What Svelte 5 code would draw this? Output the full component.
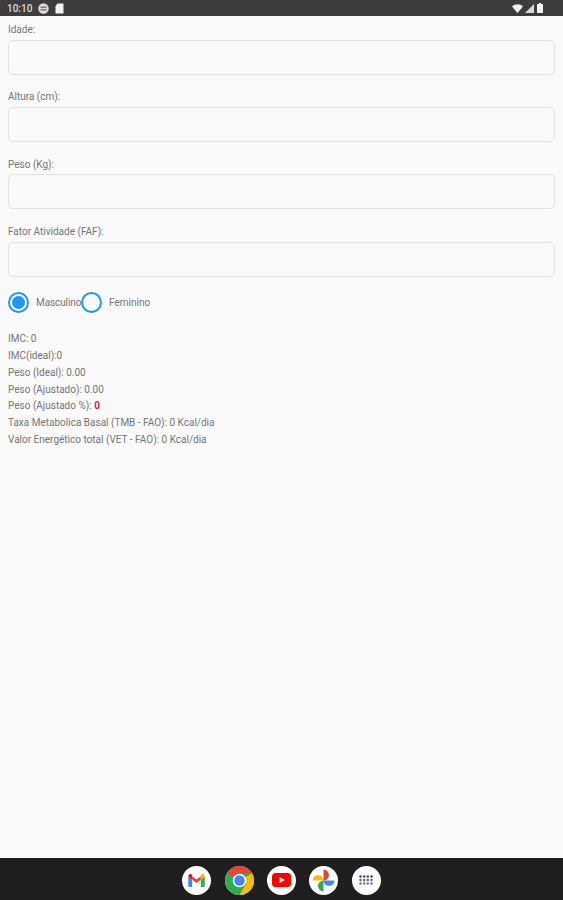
<script>
  const fields = ['Idade:', 'Altura (cm):', 'Peso (Kg):', 'Fator Atividade (FAF):'];
  const results = [
    ['IMC: 0'],
    ['IMC(ideal):0'],
    ['Peso (Ideal): 0.00'],
    ['Peso (Ajustado): 0.00'],
    ['Peso (Ajustado %): ', '0'],
    ['Taxa Metabolica Basal (TMB - FAO): 0 Kcal/dia'],
    ['Valor Energético total (VET - FAO): 0 Kcal/dia']
  ];
  const gridColors = ['#2f3d8c', '#565b80', '#6a6d85'];
</script>

<div class="screen">
  <header class="status">
    <span class="clock">10:10</span>
    <svg class="st-icon" width="11" height="11" viewBox="0 0 11 11">
      <circle cx="5.5" cy="5.5" r="5.2" fill="#dcdcdc" />
      <rect x="2.5" y="3.6" width="6" height="1.1" fill="#555" />
      <rect x="2.5" y="6.3" width="6" height="1.1" fill="#555" />
    </svg>
    <svg class="st-icon card" width="9" height="11" viewBox="0 0 9 11">
      <path d="M2.5 0.5H8a.5.5 0 0 1 .5.5v9a.5.5 0 0 1-.5.5H1a.5.5 0 0 1-.5-.5V3z" fill="#f2f2f2" />
    </svg>
    <span class="spacer"></span>
    <svg width="11" height="9" viewBox="0 0 11 9">
      <path d="M0 2.6C3-.6 8-.6 11 2.6L5.5 9z" fill="#f2f2f2" />
    </svg>
    <svg width="9" height="9" viewBox="0 0 9 9">
      <path d="M9 0V9H0z" fill="#d8d8d8" />
    </svg>
    <svg class="battery" width="6" height="10" viewBox="0 0 6 10">
      <path d="M2 0h2v1h1.500a.5.5 0 0 1 .5.5V9.500a.5.5 0 0 1-.5.5H.5a.5.5 0 0 1-.5-.5V1.500A.5.5 0 0 1 .5 1H2z" fill="#f2f2f2" />
    </svg>
  </header>

  <main class="content">
    <div class="fields">
      {#each fields as label}
        <label class="field">
          <span class="label">{label}</span>
          <input type="text" />
        </label>
      {/each}
    </div>

    <div class="radios">
      <span class="radio on"><span class="dot"></span></span>
      <span class="radio-label first">Masculino</span>
      <span class="radio"></span>
      <span class="radio-label">Feminino</span>
    </div>

    <div class="results">
      {#each results as line}
        <div class="line">{line[0]}{#if line[1]}<b>{line[1]}</b>{/if}</div>
      {/each}
    </div>
  </main>

  <footer class="dock">
    <span class="app">
      <svg width="17" height="13" viewBox="0 0 19 15">
        <path d="M0 2.500V13.500a1.500 1.500 0 0 0 1.500 1.500H4.500V6.500z" fill="#4285f4" />
        <path d="M14.500 6.500V15h3a1.500 1.500 0 0 0 1.500-1.500V2.500z" fill="#34a853" />
        <path d="M4.500 6.500V2.500L9.500 6.300L14.500 2.500V6.500L9.500 10.300z" fill="#ea4335" />
        <path d="M0 2.500C0 .5 2.300-.6 3.800.5L4.500 1V6.500z" fill="#c5221f" />
        <path d="M19 2.500C19 .5 16.700-.6 15.200.5L14.500 1V6.500z" fill="#fbbc04" />
      </svg>
    </span>
    <span class="app">
      <svg width="29" height="29" viewBox="0 0 29 29">
        <circle cx="14.500" cy="14.500" r="14.500" fill="#34a853" />
        <path d="M14.500 14.500L2 7.300A14.500 14.500 0 0 1 27.050 7.250H14.500z" fill="#ea4335" />
        <path d="M14.500 14.500L27.050 7.250A14.500 14.500 0 0 1 14.500 29z" fill="#fbbc04" />
        <path d="M14.500 14.500L7.300 27.100L14.500 29L20.800 18z" fill="#34a853" />
        <circle cx="14.500" cy="14.500" r="6.800" fill="#fff" />
        <circle cx="14.500" cy="14.500" r="5.200" fill="#4285f4" />
      </svg>
    </span>
    <span class="app">
      <svg width="19" height="14" viewBox="0 0 19 14">
        <rect width="19" height="14" rx="3.500" fill="#f00" />
        <path d="M7.600 4v6l5-3z" fill="#fff" />
      </svg>
    </span>
    <span class="app">
      <svg width="23" height="23" viewBox="0 0 21 21">
        <path d="M10.500 10.500H0.500A5 5 0 0 1 10.500 10.500z" fill="#fbbc04" />
        <path d="M10.500 10.500V0.500A5 5 0 0 1 10.500 10.500z" fill="#ea4335" />
        <path d="M10.500 10.500H20.500A5 5 0 0 1 10.500 10.500z" fill="#4285f4" />
        <path d="M10.500 10.500V20.500A5 5 0 0 1 10.500 10.500z" fill="#34a853" />
      </svg>
    </span>
    <span class="app">
      <svg width="14" height="10" viewBox="0 0 14 10">
        {#each [1.500, 5, 8.500] as y, row}
          {#each [1.500, 5.200, 8.800, 12.500] as x}
            <circle cx={x} cy={y} r="1.200" fill={gridColors[row]} />
          {/each}
        {/each}
      </svg>
    </span>
  </footer>
</div>

<style>
  :global(body) {
    margin: 0;
    background: #fafafa;
  }
  .screen {
    display: flex;
    flex-direction: column;
    height: 900px;
    font-family: Roboto, "Liberation Sans", sans-serif;
    color: #757575;
    overflow: hidden;
  }
  .status {
    display: flex;
    align-items: center;
    gap: 2px;
    height: 16px;
    padding: 0 20px 0 7px;
    background: #3d3d3d;
    color: #ddd;
    flex: none;
  }
  .clock {
    font-size: 10px;
    font-weight: 500;
    margin-right: 4px;
  }
  .card {
    margin-left: 4px;
  }
  .battery {
    margin-left: 1px;
  }
  .spacer {
    flex: 1;
  }
  .content {
    flex: 1;
    padding: 8px 8px 0;
    background: #fafafa;
  }
  .fields {
    display: flex;
    flex-direction: column;
    gap: 16.900px;
  }
  .field {
    display: block;
  }
  .label {
    display: block;
    font-size: 10px;
    line-height: 12px;
    margin-bottom: 3.500px;
  }
  input {
    display: block;
    box-sizing: border-box;
    width: 100%;
    height: 35px;
    background: #fafafa;
    border: 1.500px solid #e2e2e2;
    border-radius: 5px;
    outline: none;
  }
  .radios {
    display: flex;
    align-items: center;
    height: 21px;
    margin-top: 15.300px;
    font-size: 10px;
  }
  .radio {
    box-sizing: border-box;
    display: flex;
    align-items: center;
    justify-content: center;
    width: 21px;
    height: 21px;
    border: 2px solid #2196f3;
    border-radius: 50%;
  }
  .dot {
    width: 13px;
    height: 13px;
    border-radius: 50%;
    background: #2196f3;
  }
  .radio-label {
    margin-left: 7px;
  }
  .first {
    width: 45px;
    white-space: nowrap;
    letter-spacing: -0.1px;
  }
  .results {
    margin-top: 18.200px;
    font-size: 10px;
  }
  .line {
    height: 16.800px;
    line-height: 16.800px;
  }
  b {
    color: #e8192c;
    font-weight: 700;
  }
  .dock {
    display: flex;
    justify-content: center;
    align-items: center;
    gap: 13.300px;
    box-sizing: border-box;
    height: 42px;
    padding-top: 2px;
    flex: none;
    background: #1e1e1e;
  }
  .app {
    display: flex;
    align-items: center;
    justify-content: center;
    width: 29px;
    height: 29px;
    border-radius: 50%;
    background: #fff;
  }
</style>
